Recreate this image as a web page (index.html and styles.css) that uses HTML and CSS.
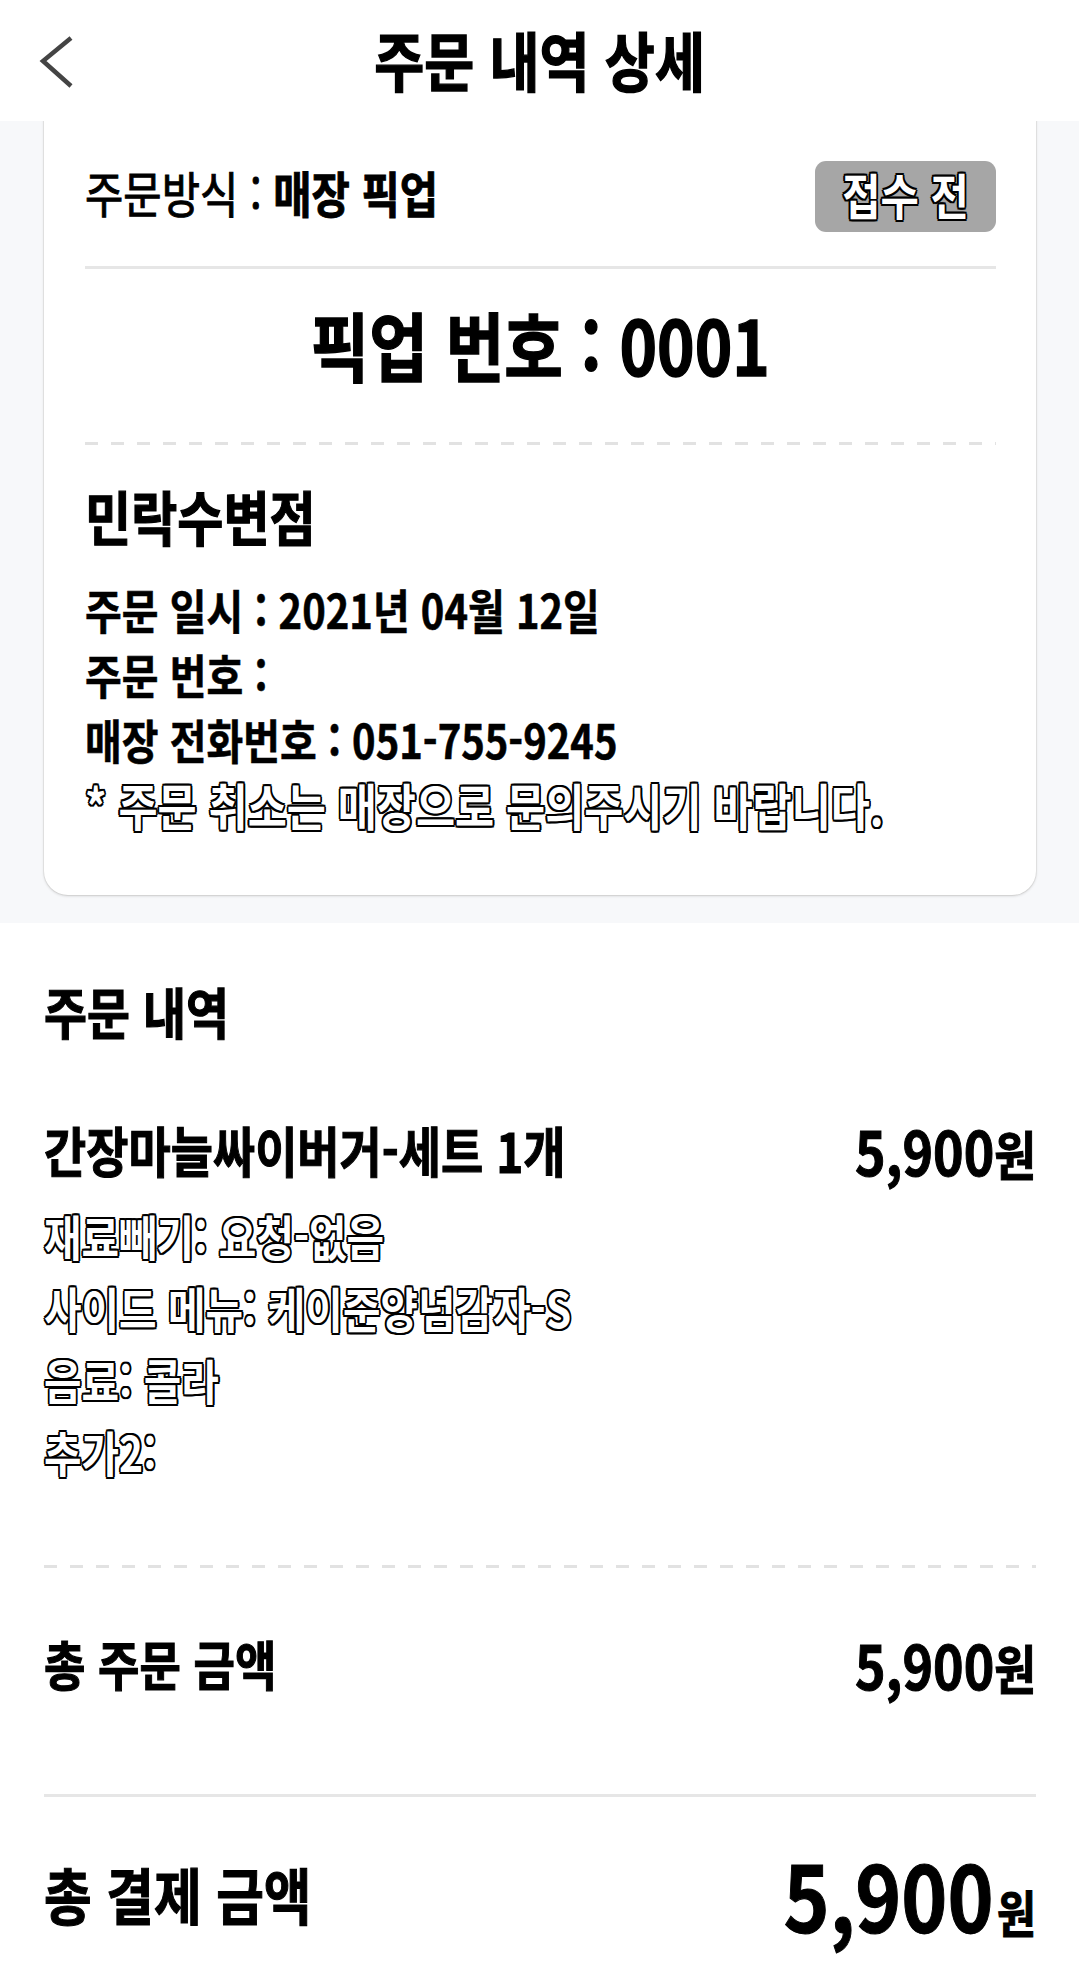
FILE: index.html
```html
<!DOCTYPE html>
<html lang="ko">
<head>
<meta charset="utf-8">
<title>주문 내역 상세</title>
<link rel="stylesheet" href="styles.css">
</head>
<body>
<header class="topbar">
  <a class="back" aria-label="뒤로">
    <svg width="40" height="60" viewBox="0 0 40 60"><path d="M33 4 L5 27 L33 52" fill="none" stroke="#444" stroke-width="4.5"/></svg>
  </a>
  <h1 class="title"><span class="nx c">주문 내역 상세</span></h1>
  <span></span>
</header>

<section class="summary">
  <div class="card">
    <div class="method">
      <span class="nx"><span class="med">주문방식 :</span> <b>매장 픽업</b></span>
      <span class="badge"><span class="nx c outline">접수 전</span></span>
    </div>
    <div class="rule"></div>
    <div class="pickup"><span class="nx c">픽업 번호 : 0001</span></div>
    <div class="dash"></div>
    <div class="store"><span class="nx">민락수변점</span></div>
    <ul class="info">
      <li><span class="nx">주문 일시 : 2021년 04월 12일</span></li>
      <li><span class="nx">주문 번호 :</span></li>
      <li><span class="nx">매장 전화번호 : <b>051-755-9245</b></span></li>
      <li class="note"><span class="nx outline">* 주문 취소는 매장으로 문의주시기 바랍니다.</span></li>
    </ul>
  </div>
</section>

<section class="order">
  <h2 class="heading"><span class="nx">주문 내역</span></h2>
  <div class="item">
    <span class="nx">간장마늘싸이버거-세트 1개</span>
    <span class="nx r price">5,900<small>원</small></span>
  </div>
  <ul class="options">
    <li><span class="nx outline">재료빼기: 요청-없음</span></li>
    <li><span class="nx outline">사이드 메뉴: 케이준양념감자-S</span></li>
    <li><span class="nx outline">음료: 콜라</span></li>
    <li><span class="nx outline">추가2:</span></li>
  </ul>
  <div class="dash wide"></div>
  <div class="total">
    <span class="nx">총 주문 금액</span>
    <span class="nx r price">5,900<small>원</small></span>
  </div>
  <div class="rule wide"></div>
  <div class="grand">
    <span class="nx">총 결제 금액</span>
    <span class="nx r price big">5,900<small>원</small></span>
  </div>
</section>
</body>
</html>
```

FILE: styles.css
```css
* { box-sizing: border-box; }
html, body { margin: 0; padding: 0; }
body {
  width: 1079px;
  background: #fff;
  color: #000;
  font-family: "Noto Sans CJK KR", "Noto Sans", sans-serif;
  font-weight: 700;
}
ul { list-style: none; margin: 0; padding: 0; }
h1, h2 { margin: 0; font-weight: 700; }
b { font-weight: 700; }

.nx {
  display: inline-block;
  white-space: nowrap;
  transform: translateY(-5px) scaleX(0.85);
  transform-origin: left center;
  -webkit-text-stroke: 0.6px #000;
}
.nx.c { transform-origin: center center; }
.nx.r { transform-origin: right center; }
.med { font-weight: 400; -webkit-text-stroke: 1px #000; }

.outline {
  color: #fff;
  -webkit-text-stroke: 0;
  text-shadow:
    -1.6px -1.6px 0 #000, 1.6px -1.6px 0 #000,
    -1.6px 1.6px 0 #000, 1.6px 1.6px 0 #000,
    0 -2.2px 0 #000, 0 2.2px 0 #000,
    -2.2px 0 0 #000, 2.2px 0 0 #000;
}

/* header */
.topbar {
  position: relative;
  z-index: 1;
  height: 121px;
  background: #fff;
  display: grid;
  grid-template-columns: 1fr auto 1fr;
  align-items: center;
}
.back { display: flex; padding-left: 38px; padding-top: 6px; }
.title { font-size: 64px; line-height: 1; }
.title .nx { -webkit-text-stroke: 1.4px #000; transform: translateY(-3px) scaleX(0.85); }

/* summary card */
.summary {
  background: #f7f8fa;
  padding: 0 43px 28px 44px;
}
.card {
  margin-top: -24px;
  background: #fff;
  border-radius: 24px;
  box-shadow: 0 1px 3px rgba(0,0,0,0.16), 0 0 0 1px #ececec;
  padding: 64px 40px 54px 41px;
}
.method {
  height: 71px;
  display: flex;
  align-items: center;
  justify-content: space-between;
  font-size: 49px;
}
.method b { -webkit-text-stroke: 1px #000; }
.badge {
  width: 181px;
  height: 71px;
  border-radius: 11px;
  background: #a6a6a6;
  display: flex;
  align-items: center;
  justify-content: center;
  font-size: 49px;
}
.badge .nx { transform: translateY(-3px) scaleX(0.85); }
.rule {
  height: 3px;
  background: #e6e6e6;
  margin-top: 34px;
}
.pickup {
  height: 173px;
  display: flex;
  align-items: center;
  justify-content: center;
  font-size: 75px;
  line-height: 1;
}
.pickup .nx { -webkit-text-stroke: 1.4px #000; transform: translateY(-12px) scaleX(0.85); }
.dash {
  height: 3px;
  background: repeating-linear-gradient(90deg, #e2e2e2 0 13px, transparent 13px 26px);
}
.store {
  font-size: 59px;
  line-height: 60px;
  margin-top: 46px;
  margin-bottom: 30px;
}
.store .nx { -webkit-text-stroke: 1.2px #000; }
.info { font-size: 47px; }
.info li {
  height: 65px;
  display: flex;
  align-items: center;
}
.info li b { -webkit-text-stroke: 0.6px #000; }
.info .note { font-size: 50px; }

/* order list */
.order { padding: 0 43px 26px 44px; }
.heading {
  font-size: 55px;
  line-height: 60px;
  padding-top: 62px;
}
.heading .nx { -webkit-text-stroke: 1.2px #000; }
.item, .total, .grand {
  display: flex;
  align-items: center;
  justify-content: space-between;
}
.item {
  height: 60px;
  margin-top: 79px;
  font-size: 54px;
}
.item .nx, .total .nx, .grand .nx { -webkit-text-stroke: 1.1px #000; }
.price { line-height: 1; font-size: 61px; }
.price small { font-size: 0.88em; }
.options { margin-top: 20px; }
.options li {
  height: 72px;
  display: flex;
  align-items: center;
  font-size: 48px;
}
.dash.wide { margin-top: 73px; }
.total {
  height: 60px;
  margin-top: 70px;
  font-size: 53px;
}
.rule.wide { margin-top: 96px; }
.grand {
  height: 80px;
  margin-top: 61px;
  font-size: 61px;
}
.price.big { font-size: 92px; }
.price.big small { font-size: 50px; margin-left: 4px; }
```
